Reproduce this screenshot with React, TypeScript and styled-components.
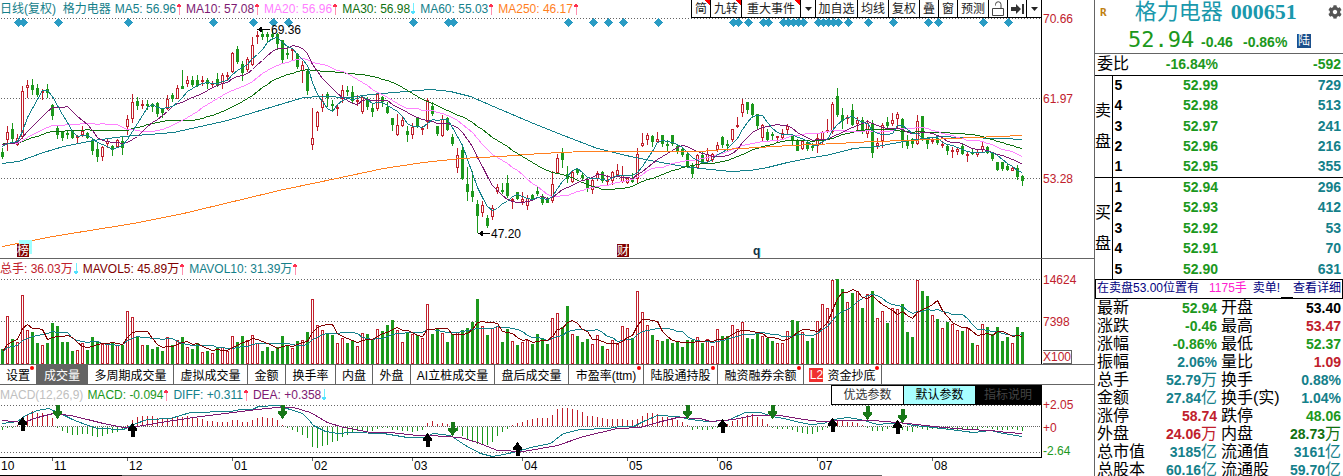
import React from "react";
import styled, { createGlobalStyle, css } from "styled-components";
import { FaCog } from "react-icons/fa";

const RED = "#c0202c";
const GREEN = "#1c981c";
const TEAL = "#14808a";
const PURPLE = "#7d1a72";
const PINK = "#ff80ff";
const DARK_GREEN = "#107010";
const ORANGE = "#ff7f1f";
const MAROON = "#800000";
const GRAY = "#646464";

const SANS = `"Liberation Sans", "Noto Sans CJK SC", sans-serif`;

const GlobalStyle = createGlobalStyle`
  *, *::before, *::after { box-sizing: border-box; }
  body { margin: 0; background: #fff; overflow: hidden; font-family: ${SANS}; font-size: 12px; color: #000; }
  button { font: inherit; color: inherit; }
  table { border-collapse: collapse; border-spacing: 0; width: 100%; }
  th { font-weight: 400; text-align: left; }
`;

/* ---------- chart data ---------- */

// One session per entry: direction (r = up, g = down), high, body top, body bottom, low
const SESSIONS = `
g148 152 156 158,r126 132 139 150,g123 129 138 142,r134 138 144 145,r86 91 136 138,r80 85 87 97,g79 85 89 94,g84 88 94 96,r89 91 92 99,g84 89 92 97,
g104 105 115 119,g126 128 134 138,g131 132 137 140,g130 133 134 138,g130 131 137 138,r135 136 137 142,r126 131 134 136,g132 133 137 138,g139 140 150 154,g143 149 156 161,
r146 147 156 160,r139 141 143 147,g145 146 149 155,r139 140 146 147,g137 141 147 154,r115 119 126 134,r94 102 118 122,g97 101 105 109,r100 104 105 108,g100 104 105 109,
g103 104 106 111,g102 103 113 116,g108 109 112 117,r95 99 108 109,g93 95 98 101,r85 88 98 98,g70 86 88 88,r76 80 83 86,g76 80 84 86,g75 80 85 86,
r76 80 81 85,g78 80 83 88,r81 83 84 87,g73 79 84 86,r73 75 83 88,r72 75 76 79,r52 53 71 72,g46 49 61 63,g61 64 72 80,r57 59 69 71,
r37 45 64 65,r31 35 36 43,g30 34 36 39,g32 34 36 42,g30 34 36 39,g33 34 43 49,g40 40 59 62,g47 53 54 58,r48 49 50 60,g53 54 66 68,
r61 65 70 82,g70 71 90 94,r108 138 144 149,r111 112 126 130,r94 101 107 111,g92 94 97 106,g100 104 105 111,r104 107 108 115,r85 90 98 102,g86 90 91 95,
g86 92 100 103,r95 100 101 105,r96 97 111 113,g97 99 106 109,g104 108 111 116,r92 94 108 110,g96 97 101 106,g102 107 112 113,g118 118 124 130,r114 125 134 135,
r116 120 125 126,g126 131 134 141,r123 127 134 138,g117 117 126 127,r126 128 129 134,r98 100 121 128,g102 106 113 115,g126 126 133 135,r115 119 135 136,g117 118 129 130,
g134 137 143 145,r148 155 167 172,g147 150 178 179,g167 184 191 200,g171 191 196 201,g200 204 215 232,r201 205 212 216,g215 218 225 227,r205 208 216 219,r184 187 191 193,
g183 190 191 193,g175 183 195 197,r198 199 200 208,g192 192 198 199,r192 199 201 204,r195 198 205 209,g194 195 199 200,g186 191 193 195,g194 196 202 204,g197 199 202 202,
r171 184 200 202,r154 158 172 173,g148 152 159 167,g166 174 178 182,r171 172 181 182,g168 169 172 174,g172 175 177 180,g177 179 187 191,r179 180 189 193,r171 173 178 180,
g171 172 180 182,r175 180 181 185,r171 172 180 184,r164 170 174 175,r166 175 181 182,r177 178 182 183,g173 178 181 182,r148 154 178 182,r133 143 145 146,r133 135 139 144,
g135 136 141 146,r132 139 141 141,g135 135 143 146,g140 144 145 151,g135 135 143 145,g144 146 150 153,g147 149 154 156,g153 154 166 167,g163 166 173 177,r154 155 167 168,
g151 155 161 163,r148 154 160 163,r153 154 159 161,r142 145 149 151,g136 137 144 147,g140 144 145 150,r129 129 139 141,r117 125 126 127,r99 104 112 116,g102 102 109 113,
g103 104 114 117,g114 114 125 129,r124 125 137 140,g129 132 139 140,g132 134 135 140,r136 136 137 142,r129 133 137 138,r124 126 129 133,g135 136 140 144,g139 140 150 150,
r140 141 148 149,g140 142 148 150,g143 146 147 150,r134 138 145 152,r131 132 140 143,r119 130 131 132,r102 104 131 133,g88 96 114 116,g108 115 120 128,r115 117 118 123,
g104 110 124 125,r117 120 123 129,g117 120 129 133,r120 123 133 137,g120 124 152 157,r138 143 145 148,r123 125 140 147,g117 122 125 128,r113 120 123 125,r112 114 118 128,
g118 119 141 147,g135 140 145 148,g138 139 143 147,r115 121 143 144,g116 116 139 140,g137 139 143 148,r137 140 141 143,g136 138 142 144,r141 144 145 147,g144 146 150 154,
r147 150 151 157,r148 149 151 154,g143 146 153 154,r152 154 155 161,g148 152 153 154,r150 152 154 156,r141 146 149 151,g146 147 152 153,g152 152 158 160,g162 162 169 170,
g162 162 168 170,g164 166 169 170,r166 168 170 170,g165 168 176 179,g175 176 180 185`
  .trim()
  .split(/,\s*/)
  .map((s) => {
    const [high, top, bottom, low] = s.slice(1).split(" ").map(Number);
    const up = s[0] === "r";
    return { up, high, top, bottom, low, close: up ? top : bottom };
  });

const VOLUMES = [
  15, 48, 25, 22, 69, 34, 32, 21, 19, 21, 41, 38, 22, 22, 13, 14, 21, 14, 27, 23, 20, 21, 21, 19, 19, 53, 47, 28, 19, 19,
  15, 17, 13, 27, 19, 24, 27, 17, 15, 21, 12, 13, 11, 16, 17, 13, 28, 22, 28, 24, 29, 21, 13, 17, 13, 17, 28, 18, 16, 23,
  24, 32, 65, 39, 34, 31, 29, 21, 26, 21, 24, 18, 31, 30, 24, 35, 33, 39, 44, 34, 22, 32, 30, 29, 26, 60, 30, 35, 31, 22,
  30, 32, 34, 36, 42, 65, 38, 29, 36, 38, 22, 35, 23, 19, 22, 24, 20, 30, 26, 20, 46, 51, 37, 58, 30, 28, 22, 25, 20, 29,
  18, 15, 24, 20, 38, 36, 26, 73, 52, 39, 29, 24, 23, 25, 21, 23, 17, 24, 24, 27, 21, 25, 18, 35, 28, 28, 39, 35, 42, 26,
  25, 32, 28, 26, 23, 21, 21, 33, 44, 43, 32, 23, 26, 43, 60, 56, 84, 85, 75, 62, 71, 73, 56, 70, 73, 46, 53, 41, 56, 55,
  60, 32, 27, 84, 73, 68, 49, 45, 36, 42, 40, 34, 33, 36, 21, 19, 40, 37, 30, 37, 23, 27, 21, 37, 32,
];

const MACD_BARS = [
  -3, -1, -1, 1, 6, 12, 15, 13, 13, 11, 8, -1, -4, -6, -8, -8, -7, -7, -9, -10, -9, -7, -6, -5, -3, 1, 6, 9, 10, 10,
  10, 8, 7, 8, 8, 9, 9, 10, 9, 8, 7, 5, 5, 4, 4, 4, 6, 6, 4, 4, 6, 8, 9, 8, 8, 6, 1, -1, -3, -5,
  -8, -11, -20, -21, -19, -18, -15, -14, -10, -8, -5, -4, -4, -4, -4, -2, -1, -1, -3, -3, -4, -4, -5, -4, -3, 3, 5, 2, 3, 2,
  -1, -4, -9, -13, -15, -17, -17, -18, -15, -9, -5, -2, 1, 3, 4, 6, 7, 8, 8, 8, 11, 17, 18, 18, 17, 16, 14, 10, 10, 9,
  8, 7, 7, 7, 7, 6, 6, 7, 10, 13, 13, 12, 9, 9, 8, 6, 4, 1, -3, -2, -3, -3, -2, -1, 1, 2, 5, 6, 9, 11,
  12, 9, 7, 2, -1, -2, -2, -2, -3, -5, -6, -7, -7, -5, -3, -1, 7, 6, 5, 4, 4, 3, 1, -1, -4, -4, -4, -2, -1, 1,
  -3, -4, -5, -1, -2, -3, -2, -2, -2, -3, -2, -3, -3, -3, -3, -3, -1, -1, -2, -3, -3, -3, -2, -3, -4,
];

const MA60 =
  "2,163 18,161 43,152 63,146 93,140 123,136 173,132 200,126 227,120 253,112 283,103 303,97 320,96 350,97 370,94 393,92 430,89 450,91 470,96 493,106 533,123 563,135 597,148 630,156 650,160 683,166 710,169 730,171 750,170 767,167 787,162 807,158 830,154 853,148 877,146 903,141 923,138 940,136 960,137 1003,138 1022,139";
const MA250 =
  "2,246 52,236 133,223 183,213 233,201 283,189 317,182 350,175 383,168 423,162 460,158 500,156 540,153 583,151 700,151 723,149 757,147 790,145 837,143 873,141 907,140 930,139 973,137 1022,135";
const DIFF =
  "2,423 17,421 25,415 37,410 48,408 60,413 72,419 85,424 97,428 123,429 133,424 147,419 170,418 190,412 230,411 240,409 252,409 258,406 278,405 283,407 293,410 302,413 308,419 313,425 325,431 338,433 350,432 383,433 407,437 423,437 433,433 450,435 465,445 480,453 492,456 503,454 517,451 530,447 550,443 563,433 580,429 607,428 620,426 633,426 645,420 657,415 677,416 690,419 707,421 727,420 745,412 760,412 772,416 783,418 800,422 810,424 823,423 833,419 847,417 860,419 877,424 900,422 913,425 933,427 957,430 973,432 990,430 1003,433 1022,436";
const DEA =
  "2,420 23,422 37,417 53,413 70,415 87,419 103,423 123,427 137,426 160,422 200,416 233,412 257,409 277,407 293,407 310,412 327,422 343,427 350,428 370,432 390,432 417,435 430,435 460,437 477,442 497,450 523,451 557,445 583,436 617,428 640,427 657,422 677,417 700,418 710,421 733,419 753,415 780,415 803,419 820,421 840,420 873,420 907,423 943,427 967,429 990,430 1007,432 1022,433";

const EVENT_MARKS = [
  18, 23, 58, 128, 213, 253, 273, 288, 413, 448, 453, 568, 593, 608, 623, 658, 733, 738, 748, 763, 768, 783, 788, 793,
  798, 803, 818, 823, 828, 833, 838, 848, 868, 893, 928, 938, 983, 1008,
];

const BUY_SIGNALS = [[22, 418], [132, 424], [427, 434], [517, 443], [722, 420], [832, 419], [897, 421]];
const SELL_SIGNALS = [[57, 405], [282, 405], [452, 422], [687, 405], [772, 405], [867, 406], [902, 409]];

const MONTHS: [number, string][] = [
  [-1, "10"], [52, "11"], [127, "12"], [232, "01"], [312, "02"], [412, "03"],
  [522, "04"], [627, "05"], [717, "06"], [817, "07"], [932, "08"],
];

const STEP = 5;
const xOf = (i: number) => 2 + i * STEP;

/* Trailing average drawn as polyline points; `before` stands for the sessions left of the chart */
function average(values: number[], span: number, before: number, toY: (v: number) => number) {
  return values
    .map((_, i) => {
      let sum = 0;
      for (let k = i - span + 1; k <= i; k++) sum += k < 0 ? before : values[k];
      return `${xOf(i)},${Math.round(toY(sum / span))}`;
    })
    .join(" ");
}

/* ---------- layout ---------- */

const Screen = styled.main`
  display: grid;
  grid-template-columns: minmax(0, 1fr) 249px;
  height: 100vh;
  overflow: hidden;
`;

const Charts = styled.section`
  display: flex;
  flex-direction: column;
  min-width: 0;
`;

const Panel = styled.div<{ $line?: boolean }>`
  display: grid;
  grid-template-columns: minmax(0, 1fr) 52px;
  border-bottom: ${(p) => (p.$line ? `1px solid ${GRAY}` : "0")};
`;

const Plot = styled.div<{ $axis?: boolean }>`
  border-right: 1px solid #000;
  border-bottom: ${(p) => (p.$axis ? "1px solid #000" : "0")};
  min-width: 0;
`;

const Canvas = styled.svg`
  display: block;
  width: 100%;
  shape-rendering: crispEdges;
  font-family: ${SANS};
  font-size: 12px;
`;

const Scale = styled.div<{ $top: number; $gap: number }>`
  display: flex;
  flex-direction: column;
  align-items: flex-start;
  gap: ${(p) => p.$gap}px;
  padding: ${(p) => p.$top}px 0 0 1px;
  color: ${RED};
  line-height: 14px;
`;

const ScaleLabel = styled.span<{ $color?: string; $boxed?: boolean }>`
  color: ${(p) => p.$color ?? "inherit"};
  white-space: nowrap;
  ${(p) =>
    p.$boxed &&
    css`
      margin-top: -7px;
      line-height: 12px;
      border: 1px solid ${GRAY};
      border-left: 0;
    `}
`;

const Header = styled.div<{ $h: number }>`
  display: flex;
  justify-content: space-between;
  height: ${(p) => p.$h}px;
  white-space: nowrap;
`;

const Legend = styled.div`
  display: flex;
  align-items: center;
  gap: 4px;
  line-height: 16px;
  min-width: 0;
  overflow: hidden;
`;

const LegendItem = styled.span<{ $color: string }>`
  display: flex;
  align-items: center;
  color: ${(p) => p.$color};
`;

const Toolbar = styled.div`
  display: flex;
  flex: none;
  border-bottom: 1px solid #000;
`;

const ToolButton = styled.button<{ $w: number; $hot?: boolean }>`
  display: flex;
  align-items: center;
  justify-content: center;
  width: ${(p) => p.$w}px;
  padding: 0;
  border: 0;
  border-left: 1px solid #000;
  background: ${(p) =>
    p.$hot ? "linear-gradient(45deg, transparent 4px, transparent calc(100% - 4px), #f00 calc(100% - 4px))" : "#fff"};
  color: #222;
  line-height: 16px;
`;

const Tabs = styled.nav`
  display: flex;
  height: 21px;
  border-top: 1px solid ${GRAY};
  border-bottom: 1px solid ${GRAY};
`;

const Tab = styled.button<{ $w: number; $active?: boolean; $dot?: boolean }>`
  position: relative;
  display: flex;
  align-items: center;
  justify-content: center;
  gap: 4px;
  flex: none;
  width: ${(p) => p.$w}px;
  padding: 0;
  border: 0;
  border-right: 1px solid ${GRAY};
  background: ${(p) => (p.$active ? GRAY : "#fff")};
  color: ${(p) => (p.$active ? "#fff" : "#000")};
  white-space: nowrap;
  ${(p) =>
    p.$dot &&
    css`
      &::after {
        content: "";
        position: absolute;
        top: 1px;
        right: 2px;
        width: 4px;
        height: 4px;
        border-radius: 50%;
        background: #f00;
      }
    `}
`;

const LevelTag = styled.span`
  background: #f03030;
  color: #fff;
  width: 14px;
  line-height: 14px;
  text-align: center;
`;

const ParamGroup = styled.div`
  display: flex;
  flex: none;
  border: 1px solid #000;
`;

const ParamButton = styled.button<{ $tone: "plain" | "picked" | "dark" }>`
  width: ${(p) => (p.$tone === "dark" ? 64 : 72)}px;
  padding: 0;
  border: 0;
  border-right: ${(p) => (p.$tone === "dark" ? "0" : "1px solid #000")};
  background: ${(p) => ({ plain: "#fff", picked: "#a8ffff", dark: "#000" })[p.$tone]};
  color: ${(p) => ({ plain: "#333", picked: "#000", dark: "#444" })[p.$tone]};
  line-height: 16px;
`;

const Quote = styled.aside`
  border-left: 1px solid ${GRAY};
  font-size: 16px;
  overflow: hidden;
`;

const QuoteHead = styled.header`
  height: 54px;
  padding: 0 1px 0 5px;
  border-bottom: 1px solid ${GRAY};
`;

const NameRow = styled.div`
  display: flex;
  align-items: center;
  height: 24px;
`;

const Flag = styled.span`
  color: #c08010;
  font: bold 11px "DejaVu Sans Mono", monospace;
`;

const StockName = styled.h1`
  display: flex;
  gap: 8px;
  margin: 0 auto 0 28px;
  color: #1a98ac;
  font: bold 22px/24px "Liberation Serif", "Noto Sans CJK SC", serif;
`;

const CnName = styled.span`
  font-weight: 400;
`;

const PriceRow = styled.div`
  display: flex;
  align-items: center;
  height: 28px;
  padding: 4px 0 0 28px;
  color: ${GREEN};
`;

const LastPrice = styled.span`
  font: 22px/24px "DejaVu Sans Mono", monospace;
  width: 73px;
`;

const Change = styled.b`
  font-size: 14px;
  line-height: 16px;
  width: 42px;
  padding-top: 4px;
`;

const Connect = styled.span`
  margin: 2px 0 0 12px;
  background: #1a4f8c;
  color: #fff;
  font-size: 12px;
  line-height: 14px;
  padding: 0 1px;
`;

const Num = styled.td<{ $color: string }>`
  padding: 0;
  text-align: right;
  color: ${(p) => p.$color};
  font-weight: bold;
  font-size: 14px;
  white-space: nowrap;
`;

const Unit = styled.span`
  font-weight: 400;
  font-size: 16px;
`;

const Book = styled.table`
  table-layout: fixed;
  line-height: 18px;

  tbody {
    border-top: 1px solid #000;
  }
  tr {
    height: 20px;
  }
  th,
  td {
    padding: 0 2px;
  }
  thead tr,
  tbody tr:nth-child(3),
  tbody tr:last-child {
    height: 21px;
  }
`;

const Side = styled.th`
  && {
    padding: 0;
  }
  border-right: 1px solid #000;
  line-height: 31px;
  vertical-align: middle;
`;

const Level = styled.th`
  font-size: 14px;
  && {
    font-weight: bold;
  }
`;

const Notice = styled.p`
  display: flex;
  margin: 0;
  height: 20px;
  padding: 0 1px;
  border: 1px solid #000;
  font-size: 12px;
  line-height: 16px;
  color: #000080;
  white-space: nowrap;
`;

const Hot = styled.span`
  margin: 0 6px 0 10px;
  color: #ff20d0;
`;

const Blank = styled.span`
  align-self: flex-end;
  width: 12px;
  height: 1px;
  margin-left: auto;
  background: #000;
`;

const DetailLink = styled.a`
  color: inherit;
  text-decoration: none;
`;

const Stats = styled.table`
  table-layout: fixed;
  line-height: 18px;

  tr {
    height: 18px;
  }
  th {
    padding: 0 0 0 2px;
    white-space: nowrap;
  }
`;

const StatNum = styled(Num)`
  padding-right: 2px;
`;

/* ---------- small drawings ---------- */

function Trend({ up }: { up: boolean }) {
  return (
    <svg width="6" height="12" viewBox="0 0 6 12" shapeRendering="crispEdges" aria-hidden="true">
      <path d="M3 1V12" stroke={up ? "#ff90b0" : "#70f0ff"} fill="none" transform={up ? undefined : "rotate(180 3 6)"} />
      <path
        d="M3 0L5.500 4H.5Z"
        fill={up ? "#ff3050" : "#50e0ff"}
        transform={up ? undefined : "rotate(180 3 6)"}
      />
    </svg>
  );
}

function Caret() {
  return (
    <svg width="7" height="4" viewBox="0 0 7 4" aria-hidden="true">
      <path d="M0 0H7L3.500 4Z" fill="#222" />
    </svg>
  );
}

function Lock() {
  return (
    <svg width="12" height="15" viewBox="0 0 12 15" fill="none" stroke="#444" aria-hidden="true">
      <path d="M.5 7.500H11.500V14.500H.5Z" />
      <path d="M3.500 4.500V3.500A2.500 2.500 0 0 1 9 3.500V7.500" />
    </svg>
  );
}

function JumpEnd() {
  return (
    <svg width="13" height="10" viewBox="0 0 13 10" fill="#333" aria-hidden="true">
      <path d="M0 3H5V0L10 5L5 10V7H0ZM11 0H13V10H11Z" />
    </svg>
  );
}

function GridLine({ y, dense }: { y: number; dense?: boolean }) {
  return <line x1="1" x2="100%" y1={y + 0.5} y2={y + 0.5} stroke={GRAY} strokeDasharray={dense ? "1 1" : "1 2"} />;
}

function Line({ points, color }: { points: string; color: string }) {
  return <polyline points={points} stroke={color} fill="none" transform="translate(.5 .5)" />;
}

function Bar({ i, top, height, up }: { i: number; top: number; height: number; up: boolean }) {
  const x = xOf(i) - 1;
  return up && height > 2 ? (
    <rect x={x + 0.5} y={top + 0.5} width="2" height={height - 1} fill="#fff" stroke={RED} />
  ) : (
    <rect x={x} y={top} width="3" height={height} fill={up ? RED : GREEN} />
  );
}

function PriceChart() {
  const closes = SESSIONS.map((s) => s.close);
  const same = (v: number) => v;
  return (
    <Canvas height="240" role="img" aria-label="日线 K 线图">
      <g transform="translate(0 -18)">
        <GridLine y={18} />
        <GridLine y={98} />
        <GridLine y={178} />
        {EVENT_MARKS.map((x) => (
          <path key={x} d={`M${x + 0.5} 18L${x + 5} 22.500L${x + 0.5} 27L${x - 4} 22.500Z`} fill="#2a9cc4" />
        ))}
        {SESSIONS.map((s, i) => (
          <g key={i}>
            <rect x={xOf(i)} y={s.high} width="1" height={s.low - s.high + 1} fill={s.up ? RED : GREEN} />
            <Bar i={i} top={s.top} height={Math.max(2, s.bottom - s.top + 1)} up={s.up} />
          </g>
        ))}
        <Line points={MA60} color={TEAL} />
        <Line points={average(closes, 30, 143, same)} color={DARK_GREEN} />
        <Line points={average(closes, 20, 143, same)} color={PINK} />
        <Line points={average(closes, 10, 143, same)} color={PURPLE} />
        <Line points={average(closes, 5, 143, same)} color={TEAL} />
        <Line points={MA250} color={ORANGE} />
        <path d="M257 29.500L262 26.500V32.500ZM261 29H270V30H261Z" />
        <text x="271" y="34">69.36</text>
        <path d="M478 233.500L483 230.500V236.500ZM482 233H490V234H482Z" />
        <text x="491" y="238">47.20</text>
        <rect x="19" y="240" width="13" height="14" fill="#a0ffff" />
        <rect x="17" y="244" width="12" height="13" fill={MAROON} />
        <text x="17" y="255" fill="#fff">榜</text>
        <rect x="617" y="244" width="12" height="13" fill={MAROON} />
        <text x="617" y="255" fill="#fff">财</text>
        <rect x="759" y="248" width="2" height="9" fill="#a0ffff" />
        <text x="753" y="255" fill="#103040" fontWeight="bold">q</text>
      </g>
    </Canvas>
  );
}

function VolumeChart() {
  const toY = (v: number) => 364 - v;
  return (
    <Canvas height="85" role="img" aria-label="成交量">
      <g transform="translate(0 -279)">
        <GridLine y={279} />
        <GridLine y={321} />
        {VOLUMES.map((v, i) => (
          <Bar key={i} i={i} top={toY(v)} height={v} up={SESSIONS[i].up} />
        ))}
        <Line points={average(VOLUMES, 10, 13, toY)} color={TEAL} />
        <Line points={average(VOLUMES, 5, 13, toY)} color={MAROON} />
      </g>
    </Canvas>
  );
}

function MacdChart() {
  return (
    <Canvas height="52" role="img" aria-label="MACD">
      <g transform="translate(0 -405)">
        <GridLine y={405} />
        <GridLine y={426} dense />
        <GridLine y={452} />
        {MACD_BARS.map((v, i) => (
          <rect
            key={i}
            x={xOf(i)}
            y={v > 0 ? 426 - v : 427}
            width="1"
            height={Math.abs(v)}
            fill={v > 0 ? RED : GREEN}
          />
        ))}
        <Line points={DIFF} color={TEAL} />
        <Line points={DEA} color={PURPLE} />
        {BUY_SIGNALS.map(([x, y]) => (
          <path key={x} d={`M${x + 0.5} ${y - 1}l4.500 6v2h-2.500v6h-4v-6h-2.500v-2z`} />
        ))}
        {SELL_SIGNALS.map(([x, y]) => (
          <path key={x} d={`M${x - 1.5} ${y}h4v6h2.500v2l-4.500 6l-4.500 -6v-2h2.500z`} fill="#187818" />
        ))}
      </g>
    </Canvas>
  );
}

function TimeAxis() {
  return (
    <Canvas height="18">
      {MONTHS.map(([x, label]) => (
        <g key={label}>
          <rect x={x} y="0" width="1" height="3" fill={GRAY} />
          <text x={x + 2} y="12">{label}</text>
        </g>
      ))}
      <rect x="0" y="17" width="882" height="1" fill={GRAY} />
      <rect x="0" y="17" width="122" height="1" />
    </Canvas>
  );
}

/* ---------- content ---------- */

const TOOLS: { w: number; label: string; icon?: React.ReactNode; hot?: boolean }[] = [
  { w: 19, label: "简", hot: true },
  { w: 31, label: "九转", hot: true },
  { w: 59, label: "重大事件", hot: true },
  { w: 15, label: "更多事件", icon: <Caret /> },
  { w: 42, label: "加自选" },
  { w: 31, label: "均线" },
  { w: 31, label: "复权" },
  { w: 19, label: "叠" },
  { w: 19, label: "窗" },
  { w: 31, label: "预测" },
  { w: 19, label: "锁定", icon: <Lock /> },
  { w: 19, label: "最新", icon: <JumpEnd /> },
  { w: 15, label: "更多", icon: <Caret /> },
];

const TABS: [string, number, boolean?][] = [
  ["设置", 37, true], ["成交量", 51], ["多周期成交量", 86], ["虚拟成交量", 74], ["金额", 38], ["换手率", 50],
  ["内盘", 37], ["外盘", 38], ["AI立桩成交量", 84], ["盘后成交量", 74], ["市盈率(ttm)", 75, true],
  ["陆股通持股", 74, true], ["融资融券余额", 86, true], ["资金抄底", 78, true],
];

type Entry = [string, string, boolean?];
const PRICE_LEGEND: Entry[] = [
  ["MA5: 56.96", TEAL, true], ["MA10: 57.08", PURPLE, true], ["MA20: 56.96", PINK, true],
  ["MA30: 56.98", DARK_GREEN, false], ["MA60: 55.03", TEAL, true], ["MA250: 46.17", ORANGE, true],
];
const VOLUME_LEGEND: Entry[] = [
  ["总手: 36.03万", RED, false], ["MAVOL5: 45.89万", MAROON, true], ["MAVOL10: 31.39万", TEAL, true],
];
const MACD_LEGEND: Entry[] = [
  ["MACD(12,26,9)", "#c0c0c0"], ["MACD: -0.094", GREEN, true], ["DIFF: +0.311", TEAL, true], ["DEA: +0.358", PURPLE, false],
];

const SELL: [number, string, number][] = [
  [5, "52.99", 729], [4, "52.98", 513], [3, "52.97", 241], [2, "52.96", 216], [1, "52.95", 355],
];
const BUY: [number, string, number][] = [
  [1, "52.94", 296], [2, "52.93", 412], [3, "52.92", 53], [4, "52.91", 70], [5, "52.90", 631],
];

const STATS: [string, string, string, string, string, string][] = [
  ["最新", "52.94", GREEN, "开盘", "53.40", "#000"],
  ["涨跌", "-0.46", GREEN, "最高", "53.47", RED],
  ["涨幅", "-0.86%", GREEN, "最低", "52.37", GREEN],
  ["振幅", "2.06%", TEAL, "量比", "1.09", RED],
  ["总手", "52.79万", TEAL, "换手", "0.88%", TEAL],
  ["金额", "27.84亿", TEAL, "换手(实)", "1.04%", TEAL],
  ["涨停", "58.74", RED, "跌停", "48.06", GREEN],
  ["外盘", "24.06万", RED, "内盘", "28.73万", DARK_GREEN],
  ["总市值", "3185亿", TEAL, "流通值", "3161亿", TEAL],
  ["总股本", "60.16亿", TEAL, "流通股", "59.70亿", TEAL],
];

function LegendList({ items, children }: { items: Entry[]; children?: React.ReactNode }) {
  return (
    <Legend>
      {children}
      {items.map(([text, color, up]) => (
        <LegendItem key={text} $color={color}>
          {text}
          {up !== undefined && <Trend up={up} />}
        </LegendItem>
      ))}
    </Legend>
  );
}

function Amount({ text }: { text: string }) {
  const unit = text.match(/[万亿]$/)?.[0];
  return unit ? (
    <>
      {text.slice(0, -1)}
      <Unit>{unit}</Unit>
    </>
  ) : (
    <>{text}</>
  );
}

function BookSide({ first, rows }: { first: string; rows: [number, string, number][] }) {
  return (
    <tbody>
      {rows.map(([level, price, size], i) => (
        <tr key={level}>
          {i === 0 && (
            <Side rowSpan={5} scope="rowgroup">
              {first}
              <br />盘
            </Side>
          )}
          <Level scope="row">{level}</Level>
          <Num $color={GREEN}>{price}</Num>
          <Num $color={TEAL}>{size}</Num>
        </tr>
      ))}
    </tbody>
  );
}

export default function App() {
  return (
    <>
      <GlobalStyle />
      <Screen>
        <Charts>
          <Panel $line>
            <Plot>
              <Header $h={18}>
                <LegendList items={PRICE_LEGEND}>
                  <LegendItem $color={TEAL}>日线(复权)&nbsp; 格力电器</LegendItem>
                </LegendList>
                <Toolbar>
                  {TOOLS.map((t) => (
                    <ToolButton key={t.label} type="button" $w={t.w} $hot={t.hot} aria-label={t.label}>
                      {t.icon ?? t.label}
                    </ToolButton>
                  ))}
                </Toolbar>
              </Header>
              <PriceChart />
            </Plot>
            <Scale $top={12} $gap={66}>
              <ScaleLabel>70.66</ScaleLabel>
              <ScaleLabel>61.97</ScaleLabel>
              <ScaleLabel>53.28</ScaleLabel>
            </Scale>
          </Panel>

          <Panel>
            <Plot>
              <Header $h={20}>
                <LegendList items={VOLUME_LEGEND} />
              </Header>
              <VolumeChart />
            </Plot>
            <Scale $top={14} $gap={28}>
              <ScaleLabel>14624</ScaleLabel>
              <ScaleLabel>7398</ScaleLabel>
              <ScaleLabel $boxed>X100</ScaleLabel>
            </Scale>
          </Panel>

          <Tabs aria-label="指标">
            {TABS.map(([label, w, dot]) => (
              <Tab key={label} type="button" $w={w} $dot={dot} $active={label === "成交量"}>
                {label === "资金抄底" && <LevelTag>L2</LevelTag>}
                {label}
              </Tab>
            ))}
          </Tabs>

          <Panel>
            <Plot $axis>
              <Header $h={20}>
                <LegendList items={MACD_LEGEND} />
                <ParamGroup>
                  <ParamButton type="button" $tone="plain">优选参数</ParamButton>
                  <ParamButton type="button" $tone="picked">默认参数</ParamButton>
                  <ParamButton type="button" $tone="dark">指标说明</ParamButton>
                </ParamGroup>
              </Header>
              <MacdChart />
            </Plot>
            <Scale $top={13} $gap={9}>
              <ScaleLabel>+2.05</ScaleLabel>
              <ScaleLabel>+0</ScaleLabel>
              <ScaleLabel $color={GREEN}>-2.64</ScaleLabel>
            </Scale>
          </Panel>
          <TimeAxis />
        </Charts>

        <Quote>
          <QuoteHead>
            <NameRow>
              <Flag>R</Flag>
              <StockName>
                <CnName>格力电器</CnName>000651
              </StockName>
              <FaCog size={14} color="#555" aria-label="设置" />
            </NameRow>
            <PriceRow>
              <LastPrice>52.94</LastPrice>
              <Change>-0.46</Change>
              <Change>-0.86%</Change>
              <Connect>陆</Connect>
            </PriceRow>
          </QuoteHead>

          <Book>
            <colgroup>
              <col width="17" />
              <col width="26" />
              <col width="82" />
              <col />
            </colgroup>
            <thead>
              <tr>
                <th colSpan={2} scope="row">委比</th>
                <Num $color={GREEN}>-16.84%</Num>
                <Num $color={GREEN}>-592</Num>
              </tr>
            </thead>
            <BookSide first="卖" rows={SELL} />
            <BookSide first="买" rows={BUY} />
          </Book>

          <Notice>
            <span>在卖盘53.00位置有</span>
            <Hot>1175手</Hot>
            <span>卖单!</span>
            <Blank />
            <DetailLink href="#detail">查看详细</DetailLink>
          </Notice>

          <Stats>
            <colgroup>
              <col width="52" />
              <col width="72" />
              <col width="62" />
              <col />
            </colgroup>
            <tbody>
              {STATS.map(([a, av, ac, b, bv, bc]) => (
                <tr key={a}>
                  <th scope="row">{a}</th>
                  <StatNum $color={ac}><Amount text={av} /></StatNum>
                  <th scope="row">{b}</th>
                  <StatNum $color={bc}><Amount text={bv} /></StatNum>
                </tr>
              ))}
            </tbody>
          </Stats>
        </Quote>
      </Screen>
    </>
  );
}
